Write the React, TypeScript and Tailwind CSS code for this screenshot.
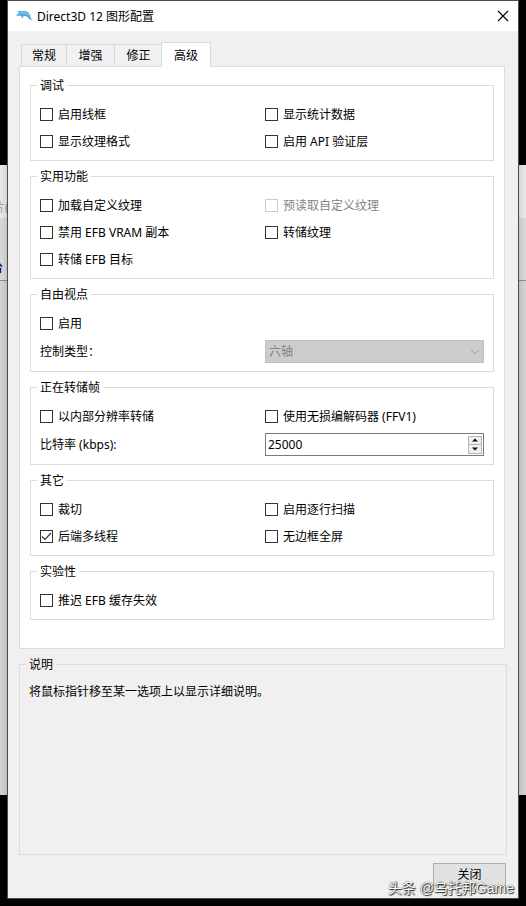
import { useState } from "react";
import type { ReactNode } from "react";
import clsx from "clsx";

const TABS = ["常规", "增强", "修正", "高级"];

/*

Dolphin logo shown in the title bar.

@component
*/
function DolphinIcon() {
    return (
        <svg width="16" height="14" viewBox="0 0 16 14" aria-hidden="true">
            <path
                d="M0 7.2C0.8 5.6 1.8 4.8 3 4C2.6 3.2 2 2.7 1.6 2.4C3.2 2 4.8 2 6 2.4C9.4 1.4 12.8 2.8 14 6.2C14.5 7.8 15 9 16 11.4C14.4 10.9 13 10 12.2 8.8C10.8 7 9.2 6.8 7.6 6.9C7.4 8 6.6 8.8 5.4 9.2C5.7 8.3 5.6 7.7 5.2 7C3.2 6.6 1.6 6.6 0 7.2Z"
                fill="#54aade"
            />
            <path
                d="M4.2 4.4C7.4 3.2 10.8 3.8 12.8 6.4"
                fill="none"
                stroke="#9fd8f2"
                strokeWidth="0.9"
            />
        </svg>
    );
}

interface CheckOptionProps {
    label: string;
    defaultChecked?: boolean;
    disabled?: boolean;
}

function CheckOption({ label, defaultChecked, disabled }: CheckOptionProps) {
    return (
        <label
            className={clsx(
                "flex h-[27px] items-center gap-[5px] whitespace-nowrap",
                disabled && "text-[#838383]"
            )}
        >
            <span className="relative flex size-[13px] shrink-0">
                <input
                    type="checkbox"
                    defaultChecked={defaultChecked}
                    disabled={disabled}
                    className="peer size-[13px] appearance-none border border-[#333333] bg-white disabled:border-[#cccccc]"
                />
                <svg
                    viewBox="0 0 13 13"
                    className="pointer-events-none absolute inset-0 hidden size-[13px] peer-checked:block"
                    aria-hidden="true"
                >
                    <path
                        d="M2 6.5L5 9.5L11 3"
                        fill="none"
                        stroke="#333333"
                        strokeWidth="1.2"
                    />
                </svg>
            </span>
            {label}
        </label>
    );
}

function OptionGroup({
    title,
    children,
}: {
    title: string;
    children: ReactNode;
}) {
    return (
        <fieldset className="border border-[#dcdcdc] px-[6px] pb-[5px] pt-[7px]">
            <legend className="px-[3px] leading-[17px]">{title}</legend>
            <div className="grid grid-cols-2 gap-x-[6px] pl-[3px] pr-[3px]">
                {children}
            </div>
        </fieldset>
    );
}

function BitrateInput() {
    const [bitrate, setBitrate] = useState<number>(25000);

    return (
        <div className="flex h-[23px] items-center border border-[#7a7a7a] bg-white pr-px">
            <input
                id="bitrate"
                type="text"
                inputMode="numeric"
                value={bitrate}
                onChange={(e) => setBitrate(Number(e.target.value) || 0)}
                className="min-w-0 flex-1 px-[2px] outline-none"
            />
            <div className="flex w-[14px] flex-col border border-[#b4b4b4] bg-[#f0f0f0]">
                <button
                    type="button"
                    aria-label="增加"
                    onClick={() => setBitrate(bitrate + 1)}
                    className="flex h-2 items-center justify-center border-b border-[#b4b4b4]"
                >
                    <svg width="6" height="4" viewBox="0 0 6 4">
                        <path d="M0 3.5L3 0.5L6 3.5Z" />
                    </svg>
                </button>
                <button
                    type="button"
                    aria-label="减少"
                    onClick={() => setBitrate(Math.max(0, bitrate - 1))}
                    className="flex h-2 items-center justify-center"
                >
                    <svg width="6" height="4" viewBox="0 0 6 4">
                        <path d="M0 0.5L3 3.5L6 0.5Z" />
                    </svg>
                </button>
            </div>
        </div>
    );
}

function AdvancedTab() {
    return (
        <div className="flex flex-col gap-[7px]">
            <OptionGroup title="调试">
                <CheckOption label="启用线框" />
                <CheckOption label="显示统计数据" />
                <CheckOption label="显示纹理格式" />
                <CheckOption label="启用 API 验证层" />
            </OptionGroup>
            <OptionGroup title="实用功能">
                <CheckOption label="加载自定义纹理" />
                <CheckOption label="预读取自定义纹理" disabled />
                <CheckOption label="禁用 EFB VRAM 副本" />
                <CheckOption label="转储纹理" />
                <CheckOption label="转储 EFB 目标" />
            </OptionGroup>
            <OptionGroup title="自由视点">
                <CheckOption label="启用" />
                <span />
                <label htmlFor="control-type" className="flex h-[29px] items-center">
                    控制类型：
                </label>
                <div className="relative flex items-center">
                    <select
                        id="control-type"
                        disabled
                        className="h-[23px] w-full appearance-none border border-[#bfbfbf] bg-[#cccccc] px-[3px] text-[#838383] opacity-100"
                    >
                        <option>六轴</option>
                    </select>
                    <svg
                        width="10"
                        height="6"
                        viewBox="0 0 10 6"
                        className="pointer-events-none absolute right-1"
                        aria-hidden="true"
                    >
                        <path
                            d="M1 0.8L5 4.8L9 0.8"
                            fill="none"
                            stroke="#9c9c9c"
                        />
                    </svg>
                </div>
            </OptionGroup>
            <OptionGroup title="正在转储帧">
                <CheckOption label="以内部分辨率转储" />
                <CheckOption label="使用无损编解码器 (FFV1)" />
                <label htmlFor="bitrate" className="flex h-[29px] items-center">
                    比特率 (kbps):
                </label>
                <div className="flex flex-col justify-center">
                    <BitrateInput />
                </div>
            </OptionGroup>
            <OptionGroup title="其它">
                <CheckOption label="裁切" />
                <CheckOption label="启用逐行扫描" />
                <CheckOption label="后端多线程" defaultChecked />
                <CheckOption label="无边框全屏" />
            </OptionGroup>
            <OptionGroup title="实验性">
                <CheckOption label="推迟 EFB 缓存失效" />
            </OptionGroup>
        </div>
    );
}

/*

Graphics settings window, opened on the advanced tab.

@component
*/
export default function App() {
    const [activeTab, setActiveTab] = useState<string>("高级");

    return (
        <div className="relative flex min-h-screen flex-col bg-black px-2 pb-2 pt-px font-['Noto_Sans','Noto_Sans_CJK_SC',sans-serif] text-[12px] leading-[17px] text-black">
            {/* the window that lies behind the dialog */}
            <div className="absolute inset-x-0 top-[165px] flex h-[630px] flex-col overflow-hidden bg-[#d3d3d3]">
                <div className="h-[53px] bg-[#e9e9e9] pt-[34px] text-[#a0a0a0]">
                    <span className="-ml-[7px]">片(</span>
                </div>
                <div className="h-[63px] border-b border-[#8f8f8f] bg-[#d9d9d9] pt-[41px] font-bold text-[#14143c]">
                    <span className="-ml-[9px]">台</span>
                </div>
            </div>

            <main className="relative flex flex-1 flex-col bg-[#f0f0f0] shadow-[0_0_8px_rgba(0,0,0,0.25)] outline outline-[#4c4c4c]">
                <header className="flex h-[30px] items-center bg-white pl-2 pr-[9px]">
                    <DolphinIcon />
                    <h1 className="ml-[5px] flex-1">Direct3D 12 图形配置</h1>
                    <button type="button" aria-label="关闭窗口">
                        <svg width="12" height="12" viewBox="0 0 12 12">
                            <path
                                d="M1 1L11 11M11 1L1 11"
                                fill="none"
                                stroke="#000000"
                                strokeWidth="1.1"
                            />
                        </svg>
                    </button>
                </header>

                <div className="flex flex-1 flex-col px-[11px] pb-3 pt-[11px]">
                    <div role="tablist" className="relative z-10 -mb-px flex items-end pl-[2px]">
                        {TABS.map((tab, index) => (
                            <button
                                key={tab}
                                type="button"
                                role="tab"
                                aria-selected={tab === activeTab}
                                onClick={() => setActiveTab(tab)}
                                className={clsx(
                                    "border-[#d9d9d9]",
                                    tab === activeTab
                                        ? "-ml-[2px] h-[25px] w-[50px] border-x border-t bg-white"
                                        : "mb-px h-[22px] border-r border-t",
                                    tab !== activeTab &&
                                        (index === 0 ? "w-[46px] border-l" : "w-12")
                                )}
                            >
                                {tab}
                            </button>
                        ))}
                    </div>
                    <section className="mr-[2px] border border-[#dcdcdc] bg-white px-[10px] pb-7 pt-[10px]">
                        <AdvancedTab />
                    </section>

                    <fieldset className="mt-[7px] flex-1 border border-[#dcdcdc] px-[6px]">
                        <legend className="px-[3px] leading-[17px]">说明</legend>
                        <p className="px-[3px] pt-[10px]">
                            将鼠标指针移至某一选项上以显示详细说明。
                        </p>
                    </fieldset>

                    <button
                        type="button"
                        className="mr-px mt-2 h-[23px] w-[73px] self-end border border-[#adadad] bg-[#e1e1e1]"
                    >
                        关闭
                    </button>
                </div>

                <p className="pointer-events-none absolute bottom-0 right-1 whitespace-nowrap font-['Liberation_Sans','Noto_Sans_CJK_SC',sans-serif] text-[14px] leading-[20px] text-white [text-shadow:0_0_1px_#000,1px_1px_1px_#222]">
                    头条 @乌托邦Game
                </p>
            </main>
        </div>
    );
}
